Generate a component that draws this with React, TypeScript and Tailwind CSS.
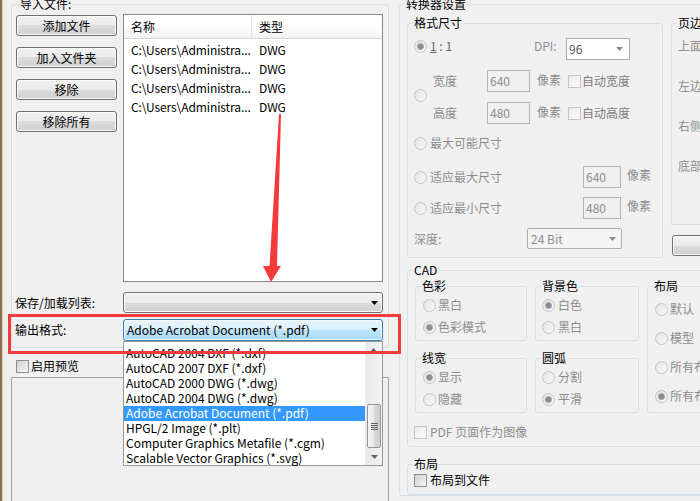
import { ReactNode } from "react"

const files = [1, 2, 3, 4]

const formats = [
  "AutoCAD 2004 DXF (*.dxf)",
  "AutoCAD 2007 DXF (*.dxf)",
  "AutoCAD 2000 DWG (*.dwg)",
  "AutoCAD 2004 DWG (*.dwg)",
  "Adobe Acrobat Document (*.pdf)",
  "HPGL/2 Image (*.plt)",
  "Computer Graphics Metafile (*.cgm)",
  "Scalable Vector Graphics (*.svg)",
]

const Radio = ({ checked = false }: { checked?: boolean }) => (
  <svg width="13" height="13" viewBox="0 0 13 13" className="block shrink-0">
    <circle cx="6.5" cy="6.5" r="6" fill="url(#radioFill)" stroke="#c2c2c2" />
    {checked && <circle cx="6.5" cy="6.5" r="3.1" fill="#8c8c8c" stroke="#a5a5a5" strokeWidth="0.8" />}
  </svg>
)

const Check = ({ enabled = false }: { enabled?: boolean }) => (
  <span
    className={
      enabled
        ? "block w-[13px] h-[13px] shrink-0 border border-[#8e8f8f] bg-linear-to-br from-[#d0d0d0] to-[#f7f7f7]"
        : "block w-[13px] h-[13px] shrink-0 border border-[#c6c6c6] bg-linear-to-br from-[#eaeaea] to-[#fbfbfb]"
    }
  />
)

const Arrow = ({ color = "#000" }: { color?: string }) => (
  <svg width="7" height="4" viewBox="0 0 7 4" className="block">
    <path d="M0 0h7L3.5 4z" fill={color} />
  </svg>
)

const Btn = ({ children, className = "" }: { children?: ReactNode; className?: string }) => (
  <div
    className={`h-[21px] flex items-center justify-center rounded-[3px] border border-[#707070] shadow-[inset_0_0_0_1px_#fbfbfb] bg-[linear-gradient(#f2f2f2,#ebebeb_50%,#dddddd_50%,#cfcfcf)] ${className}`}
  >
    {children}
  </div>
)

const Input = ({ children, className = "" }: { children: ReactNode; className?: string }) => (
  <div className={`h-[22px] shrink-0 border border-[#b3b3b3] bg-[#f0f0f0] flex items-center pl-[2px] text-[#8d8d8d] ${className}`}>
    {children}
  </div>
)

const SubGroup = ({
  title,
  items,
  wide = false,
}: {
  title: string
  items: [string, boolean][]
  wide?: boolean
}) => (
  <fieldset className="border border-[#d5dfe5] rounded-[3px]">
    <legend className="ml-[5px] px-[1px]">{title}</legend>
    <div className={wide ? "flex flex-col gap-[6px] pl-[6px] pt-[3px] pb-[5px]" : "flex flex-col gap-[6px] pl-[7px] pt-[3px] pb-[5px]"}>
      {items.map(([label, on]) => (
        <div key={label} className="h-[16px] flex items-center">
          <Radio checked={on} />
          <span className={wide ? "ml-[3px] text-[#8d8d8d]" : "ml-[2px] text-[#8d8d8d]"}>{label}</span>
        </div>
      ))}
    </div>
  </fieldset>
)

export default function App() {
  return (
    <div className="relative w-[700px] h-[501px] overflow-hidden bg-[#f0f0f0] flex text-[12px] leading-[16px] text-black font-['Noto_Sans_CJK_SC','Noto_Sans',sans-serif]">
      <svg width="0" height="0" className="absolute">
        <defs>
          <linearGradient id="radioFill" x1="0" y1="0" x2="1" y2="1">
            <stop offset="0" stopColor="#e2e2e2" />
            <stop offset="1" stopColor="#fbfbfb" />
          </linearGradient>
        </defs>
      </svg>

      {/* window edge */}
      <div className="flex w-[3px] shrink-0">
        <div className="w-[2px] bg-[#8d7252]" />
        <div className="w-[1px] bg-[#d9cdbb]" />
      </div>

      {/* left: import files */}
      <div className="w-[396px] shrink-0 flex flex-col">
        <fieldset className="-mt-[4px] ml-[8px] w-[378px] border border-[#d5dfe5] rounded-[3px]">
          <legend className="ml-[7px] px-[1px]">导入文件:</legend>
          <div className="pl-[4px] pb-[6px]">
            <div className="flex gap-[6px] pt-[2px]">
              <div className="w-[101px] flex flex-col gap-[11px] pt-[1px]">
                <Btn>添加文件</Btn>
                <Btn>加入文件夹</Btn>
                <Btn>移除</Btn>
                <Btn>移除所有</Btn>
              </div>
              <div className="w-[260px] h-[268px] border border-[#828790] bg-white">
                <div className="flex h-[24px] border-b border-[#d5d5d5] bg-[linear-gradient(#ffffff,#ffffff_45%,#f1f2f4)]">
                  <div className="w-[128px] pl-[7px] flex items-center border-r border-[#e3e6ea]">名称</div>
                  <div className="pl-[7px] flex items-center">类型</div>
                </div>
                <div className="pt-[1px]">
                  {files.map((f) => (
                    <div key={f} className="flex h-[19px] items-center">
                      <div className="w-[128px] pl-[7px] whitespace-nowrap tracking-[-0.1px]">{"C:\\Users\\Administra..."}</div>
                      <div className="pl-[7px]">DWG</div>
                    </div>
                  ))}
                </div>
              </div>
            </div>

            <div className="mt-[10px] flex items-center h-[21px]">
              <span className="w-[108px] -ml-[1px]">保存/加载列表:</span>
              <Btn className="w-[260px] justify-end! pr-[4px]">
                <Arrow />
              </Btn>
            </div>
            <div className="mt-[6px] flex items-center h-[22px]">
              <span className="w-[108px] -ml-[1px]">输出格式:</span>
              <div className="w-[260px] h-[22px] rounded-[3px] border border-[#3c7fb1] shadow-[inset_0_0_0_1px_#f4fbff] bg-[linear-gradient(#eaf6fd,#d9f0fc_50%,#bee6fd_50%,#a7d9f5)] flex items-center justify-between pl-[3px] pr-[4px]">
                <span>Adobe Acrobat Document (*.pdf)</span>
                <Arrow />
              </div>
            </div>
          </div>
        </fieldset>

        <div className="mt-[10px] ml-[13px] h-[16px] flex items-center">
          <Check enabled />
          <span className="ml-[2px]">启用预览</span>
        </div>
        <div className="mt-[3px] ml-[8px] w-[378px] flex-1 border-t border-l border-r border-[#a0a0a0]" />
      </div>

      {/* right: converter settings */}
      <fieldset className="-mt-[4px] w-[320px] shrink-0 self-start border border-[#d5dfe5] rounded-[3px]">
        <legend className="ml-[5px] px-[1px]">转换器设置</legend>
        <div className="pl-[7px] pt-[3px] flex flex-col">
          <div className="flex gap-[8px] items-start">
            <fieldset className="w-[256px] border border-[#d5dfe5] rounded-[3px]">
              <legend className="ml-[5px] px-[1px]">格式尺寸</legend>
              <div className="pl-[6px] pt-[7px] pb-[8px] text-[#8d8d8d]">
                <div className="flex h-[22px] items-start">
                  <div className="mt-[2px]">
                    <Radio checked />
                  </div>
                  <span className="ml-[3px] w-[104px] text-[#6a6a6a]">
                    <span className="underline">1</span> : 1
                  </span>
                  <span className="w-[32px]">DPI:</span>
                  <div className="w-[64px] h-[22px] border border-[#acacac] bg-white flex items-center justify-between pl-[2px] pr-[6px] text-[#555]">
                    <span>96</span>
                    <Arrow color="#8a8a8a" />
                  </div>
                </div>

                <div className="flex mt-[10px]">
                  <div className="mt-[19px]">
                    <Radio />
                  </div>
                  <div className="ml-[6px] flex flex-col gap-[10px]">
                    <div className="flex h-[22px] items-center">
                      <span className="w-[54px]">宽度</span>
                      <Input className="w-[43px]">640</Input>
                      <span className="ml-[7px] w-[31px] -mt-[3px]">像素</span>
                      <Check />
                      <span className="ml-[1px] text-[#7d7d7d]">自动宽度</span>
                    </div>
                    <div className="flex h-[22px] items-center">
                      <span className="w-[54px]">高度</span>
                      <Input className="w-[43px]">480</Input>
                      <span className="ml-[7px] w-[31px] -mt-[3px]">像素</span>
                      <Check />
                      <span className="ml-[1px] text-[#7d7d7d]">自动高度</span>
                    </div>
                  </div>
                </div>

                <div className="mt-[11px] h-[16px] flex items-center">
                  <Radio />
                  <span className="ml-[3px]">最大可能尺寸</span>
                </div>
                <div className="mt-[15px] h-[22px] flex items-center">
                  <Radio />
                  <span className="ml-[3px] w-[153px]">适应最大尺寸</span>
                  <Input className="w-[38px]">640</Input>
                  <span className="ml-[6px] -mt-[4px]">像素</span>
                </div>
                <div className="mt-[9px] h-[22px] flex items-center">
                  <Radio />
                  <span className="ml-[3px] w-[153px]">适应最小尺寸</span>
                  <Input className="w-[38px]">480</Input>
                  <span className="ml-[6px] -mt-[4px]">像素</span>
                </div>
                <div className="mt-[9px] h-[21px] flex items-center">
                  <span className="w-[113px]">深度:</span>
                  <div className="w-[95px] h-[21px] rounded-[2px] border border-[#adadad] bg-[#f4f4f4] flex items-center justify-between pl-[3px] pr-[5px]">
                    <span>24 Bit</span>
                    <Arrow color="#8a8a8a" />
                  </div>
                </div>
              </div>
            </fieldset>

            <div className="flex flex-col w-[100px]">
              <fieldset className="h-[210px] border border-[#d5dfe5] rounded-[3px]">
                <legend className="ml-[5px] px-[1px]">页边</legend>
                <div className="pl-[6px] pt-[7px] flex flex-col gap-[24px] text-[#8d8d8d]">
                  <span>上面</span>
                  <span>左边</span>
                  <span>右侧</span>
                  <span>底部</span>
                </div>
              </fieldset>
              <Btn className="mt-[10px] ml-[1px] w-[80px]" />
            </div>
          </div>

          <fieldset className="mt-[4px] w-[300px] border border-[#d5dfe5] rounded-[3px]">
            <legend className="ml-[5px] px-[1px]">CAD</legend>
            <div className="pl-[7px] pb-[6px]">
              <div className="flex gap-[8px] items-start">
                <div className="w-[112px] flex flex-col gap-[9px]">
                  <SubGroup title="色彩" items={[["黑白", false], ["色彩模式", true]]} />
                  <SubGroup title="线宽" items={[["显示", true], ["隐藏", false]]} />
                </div>
                <div className="w-[104px] flex flex-col gap-[9px]">
                  <SubGroup title="背景色" wide items={[["白色", true], ["黑白", false]]} />
                  <SubGroup title="圆弧" wide items={[["分割", false], ["平滑", true]]} />
                </div>
                <fieldset className="w-[100px] border border-[#d5dfe5] rounded-[3px]">
                  <legend className="ml-[5px] px-[1px]">布局</legend>
                  <div className="pl-[7px] pt-[7px] pb-[8px] flex flex-col gap-[13px] text-[#8d8d8d]">
                    {([["默认", false], ["模型", false], ["所有布局", false], ["所有布局页", true]] as [string, boolean][]).map(
                      ([label, on]) => (
                        <div key={label} className="h-[16px] flex items-center whitespace-nowrap">
                          <Radio checked={on} />
                          <span className="ml-[2px]">{label}</span>
                        </div>
                      )
                    )}
                  </div>
                </fieldset>
              </div>
              <div className="mt-[11px] -ml-[1px] h-[16px] flex items-center">
                <Check />
                <span className="ml-[3px] text-[#8d8d8d]">PDF 页面作为图像</span>
              </div>
            </div>
          </fieldset>

          <fieldset className="mt-[9px] w-[300px] border border-[#d5dfe5] rounded-[3px]">
            <legend className="ml-[5px] px-[1px]">布局</legend>
            <div className="pl-[6px] pb-[6px] h-[22px] flex items-start">
              <div className="h-[16px] flex items-center">
                <Check enabled />
                <span className="ml-[3px]">布局到文件</span>
              </div>
            </div>
          </fieldset>
        </div>
      </fieldset>

      {/* open drop-down of 输出格式 */}
      <div className="absolute left-[123px] top-[341px] w-[260px] h-[125px] border border-[#979797] bg-white flex">
        <div className="flex-1 pt-[4px]">
          {formats.map((f, i) => (
            <div
              key={f}
              className={
                i === 4
                  ? "h-[15px] leading-[14px] pl-[2px] whitespace-nowrap bg-[#3399ff] text-white"
                  : "h-[15px] leading-[14px] pl-[2px] whitespace-nowrap"
              }
            >
              {f}
            </div>
          ))}
        </div>
        <div className="w-[17px] flex flex-col bg-[linear-gradient(90deg,#e8e8e8,#f3f3f3)] border-l border-[#ececec]">
          <div className="h-[17px] flex items-center justify-center rotate-180">
            <Arrow color="#606060" />
          </div>
          <div className="h-[45px]" />
          <div className="mx-[1px] h-[44px] rounded-[2px] border border-[#979797] bg-[linear-gradient(90deg,#f3f3f3,#e9e9e9_50%,#d8d8d8_50%,#cfcfcf)] flex flex-col items-center justify-center gap-[1px]">
            <div className="w-[7px] h-[1px] bg-[#5f5f5f]" />
            <div className="w-[7px] h-[1px] bg-[#5f5f5f]" />
            <div className="w-[7px] h-[1px] bg-[#5f5f5f]" />
            <div className="w-[7px] h-[1px] bg-[#5f5f5f]" />
          </div>
          <div className="flex-1 flex items-center justify-center">
            <Arrow color="#606060" />
          </div>
        </div>
      </div>

      {/* red highlight + arrow */}
      <div className="absolute left-[8px] top-[314px] w-[393px] h-[40px] border-[3px] border-[#f43a3a]" />
      <svg className="absolute left-[258px] top-[110px]" width="28" height="176" viewBox="0 0 28 176">
        <path d="M21 4 L23 4 L19 156 L11.5 156 Z" fill="#f43a3a" />
        <path d="M5 156 L23 156 L13 172 Z" fill="#f43a3a" />
      </svg>
    </div>
  )
}
